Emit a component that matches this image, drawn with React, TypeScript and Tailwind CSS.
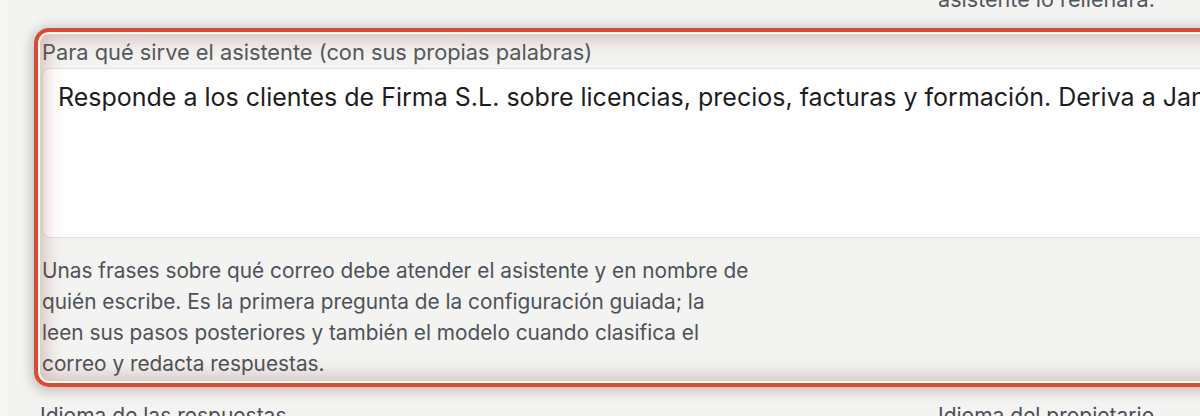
const fieldText =
  "Responde a los clientes de Firma S.L. sobre licencias, precios, facturas y formación. Deriva a Jana las consultas que no sepa resolver.";

export default function App() {
  return (
    <div className="flex h-[416px] w-[1200px] overflow-hidden bg-[#f3f3f1] font-['Inter',sans-serif]">
      <div className="w-2 shrink-0 bg-[#f7f7f6]"></div>
      <div className="w-[1800px] shrink-0 pl-[26px]">
        <div className="-mt-[16px] grid grid-cols-[904px_1fr]">
          <div></div>
          <p className="text-[21.6px] leading-[31px] text-[#52575d]">
            asistente lo rellenará.
          </p>

          {/* highlighted field */}
          <div className="relative col-span-2 mt-[13px] pb-[8px] pl-[8px] pt-[9px]">
            <label className="block text-[21.8px] leading-[30px] text-[#54595f]">
              Para qué sirve el asistente (con sus propias palabras)
            </label>
            <textarea
              readOnly
              defaultValue={fieldText}
              className="mt-px block h-[170px] w-full resize-none rounded-lg border border-[#e2e2df] bg-white px-[15px] pt-[11px] font-['Inter',sans-serif] text-[25px] leading-[34px] text-[#1d1d1f] outline-none"
            />
            <p className="mt-[17px] text-[20.8px] leading-[31px] text-[#4d5258]">
              Unas frases sobre qué correo debe atender el asistente y en nombre de
              <br />
              quién escribe. Es la primera pregunta de la configuración guiada; la
              <br />
              leen sus pasos posteriores y también el modelo cuando clasifica el
              <br />
              correo y redacta respuestas.
            </p>
            <div className="pointer-events-none absolute inset-0 z-10 rounded-[15px] border-4 border-[#e2472d] shadow-[inset_0_0_0_2px_#ffffff,inset_0_0_20px_5px_rgba(130,55,40,0.32),0_2px_12px_3px_rgba(0,0,0,0.2)]"></div>
          </div>

          <p className="mt-[14px] pl-[6px] text-[21px] leading-[30px] text-[#4a4f55]">
            Idioma de las respuestas
          </p>
          <p className="mt-[14px] text-[21px] leading-[30px] text-[#4a4f55]">
            Idioma del propietario
          </p>
        </div>
      </div>
    </div>
  );
}
